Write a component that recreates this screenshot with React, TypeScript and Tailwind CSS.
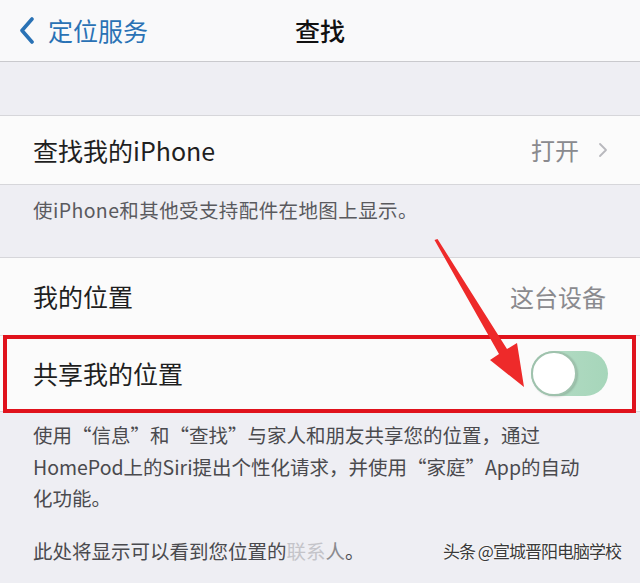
import React from "react";

const font = { fontFamily: '"Noto Sans CJK SC", "Noto Sans", sans-serif' };

export default function App() {
  return (
    <div
      className="relative w-[640px] h-[583px] overflow-hidden bg-[#eeeef3] text-[#1f1f1f]"
      style={font}
    >
      {/* nav bar */}
      <div className="h-[62px] bg-[#f9f9fa] border-b border-[#c9c9cd] grid grid-cols-3 items-center">
        <div className="flex items-center pl-[19px] gap-[13px] text-[#2a72b5]">
          <svg width="16" height="27" viewBox="0 0 16 27" fill="none">
            <path d="M13 2 L3 13.5 L13 25" stroke="#2a72b5" strokeWidth="3.6" strokeLinecap="round" strokeLinejoin="round" />
          </svg>
          <span className="text-[25px] leading-none">定位服务</span>
        </div>
        <div className="text-center text-[25px] leading-none font-medium text-[#111]">查找</div>
        <div />
      </div>

      <div className="h-[53px]" />

      {/* find my iphone */}
      <div className="h-[70px] bg-[#fbfbfb] border-y border-[#d6d6da] flex items-center pl-[33px] pr-[32px]">
        <span className="text-[25px] leading-none flex-1">查找我的iPhone</span>
        <span className="text-[24px] leading-none text-[#8a8a8e]">打开</span>
        <svg className="ml-[19px]" width="10" height="16" viewBox="0 0 10 16" fill="none">
          <path d="M2 2 L8 8 L2 14" stroke="#b8b8bd" strokeWidth="1.8" strokeLinecap="round" strokeLinejoin="round" />
        </svg>
      </div>

      <div className="h-[72px] pl-[33px] pt-[12px]">
        <p className="text-[19.5px] leading-[26px] text-[#5a5a5e] tracking-[0.4px]">使iPhone和其他受支持配件在地图上显示。</p>
      </div>

      {/* location group */}
      <div className="bg-[#fbfbfb] border-y border-[#d6d6da]">
        <div className="h-[78px] flex items-center pl-[33px] pr-[34px] border-b border-[#e0e0e4]">
          <span className="text-[25px] leading-none flex-1">我的位置</span>
          <span className="text-[24px] leading-none text-[#8a8a8e]">这台设备</span>
        </div>
        <div className="relative h-[75px] flex items-center pl-[33px] pr-[32px]">
          <span className="text-[25px] leading-none flex-1">共享我的位置</span>
          <div className="relative w-[77px] h-[45px] rounded-full bg-gradient-to-r from-[#b6dcc6] to-[#a6d6ba]">
            <div className="absolute left-0 top-0 w-[46px] h-[45px] rounded-full bg-white border-[2px] border-[#9fc2ad] shadow-[1px_1px_2px_rgba(0,0,0,0.15)]" />
          </div>
          <div className="absolute left-[3px] right-[4px] top-[-1px] bottom-[-2px] border-[4px] border-[#e0121c]" />
        </div>
      </div>

      <div className="pl-[33px] pr-[20px] pt-[7px]">
        <p className="text-[19.5px] leading-[31.5px] text-[#4a4a4e]">
          使用“信息”和“查找”与家人和朋友共享您的位置，通过
          <br />
          HomePod上的Siri提出个性化请求，并使用“家庭”App的自动
          <br />
          化功能。
        </p>
        <p className="mt-[21px] text-[19.5px] leading-[31.5px] text-[#4a4a4e]">
          此处将显示可以看到您位置的<span className="text-[#c4c4c9]">联系</span><span className="text-[#8a8a8e]">人</span>。
        </p>
      </div>

      {/* watermark */}
      <div className="absolute left-[443px] top-[539px] whitespace-nowrap text-[17px] tracking-[-1px] leading-[24px] text-[#3a3a3a] [text-shadow:0_0_2px_#fff,0_0_2px_#fff]">
        头条 @宣城晋阳电脑学校
      </div>

      {/* arrow annotation */}
      <svg className="absolute left-0 top-0 pointer-events-none" width="640" height="583" viewBox="0 0 640 583">
        <polygon
          points="434.5,240 437.5,239 507,349 517,343 524,387 490,360 499,354"
          fill="#ee2a2a"
        />
      </svg>
    </div>
  );
}
